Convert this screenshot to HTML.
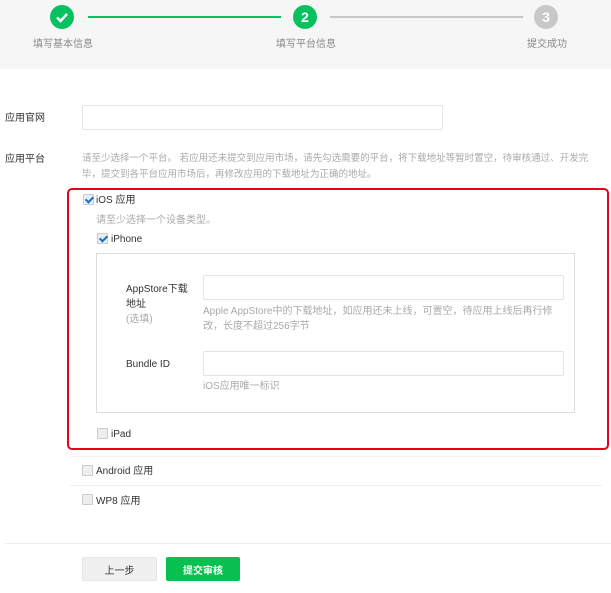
<!DOCTYPE html>
<html><head><meta charset="utf-8"><style>
*{margin:0;padding:0;box-sizing:border-box}
body{width:611px;height:593px;background:#fff;font-family:"Liberation Sans","Noto Sans CJK SC",sans-serif;position:relative;overflow:hidden;color:#333}
.a{position:absolute;white-space:nowrap;line-height:12px}
.hdr{position:absolute;left:0;top:0;width:611px;height:69px;background:#f6f6f6}
.c{position:absolute;width:24px;height:24px;border-radius:50%;color:#fff;font-size:14px;font-weight:bold;text-align:center;line-height:24px}
.l{position:absolute;height:2px;top:16px}
.sl{font-size:10px;color:#888;top:39px}
.lab{font-size:10px;color:#333}
.inp{position:absolute;border:1px solid #e4e4e4;border-radius:2px;background:#fff}
.tip{font-size:10px;color:#aaa}
.cb{position:absolute;width:11px;height:11px;border:1px solid #ccc;background:#eee;border-radius:1px}
.cb.on{background:#e8eef5}
.cb.on::after{content:"";position:absolute;left:3px;top:0px;width:3px;height:6px;border:solid #1a6fc4;border-width:0 2px 2px 0;transform:rotate(45deg)}
.t{font-size:10px;color:#333}
.hr{position:absolute;height:1px;background:#ececec}
.btn{position:absolute;display:flex;align-items:center;justify-content:center;font-size:10px;border-radius:2px}
</style></head><body>
<div class="hdr"></div>
<div class="c" style="left:50px;top:5px;background:#07c160"><svg width="24" height="24"><path d="M7 12.5l3.5 3.5 6.5-7" stroke="#fff" stroke-width="2.5" fill="none"/></svg></div>
<div class="l" style="left:88px;width:193px;background:#07c160"></div>
<div class="c" style="left:293px;top:5px;background:#07c160">2</div>
<div class="l" style="left:330px;width:193px;background:#c8c8c8"></div>
<div class="c" style="left:534px;top:5px;background:#c8c8c8">3</div>
<div class="a sl" style="left:33px">填写基本信息</div>
<div class="a sl" style="left:276px">填写平台信息</div>
<div class="a sl" style="left:527px">提交成功</div>

<div class="a lab" style="left:5px;top:113px">应用官网</div>
<div class="inp" style="left:82px;top:105px;width:361px;height:25px"></div>
<div class="a lab" style="left:5px;top:154px">应用平台</div>
<div class="a tip" style="left:82px;top:151px;line-height:16px;font-size:9.5px">请至少选择一个平台。 若应用还未提交到应用市场，请先勾选需要的平台，将下载地址等暂时置空，待审核通过、开发完<br>毕，提交到各平台应用市场后，再修改应用的下载地址为正确的地址。</div>

<div style="position:absolute;left:67px;top:188px;width:542px;height:262px;border:2px solid #e8001c;border-radius:5px"></div>
<div class="cb on" style="left:83px;top:194px"></div>
<div class="a t" style="left:96px;top:195px">iOS 应用</div>
<div class="a tip" style="left:96px;top:215px">请至少选择一个设备类型。</div>
<div class="cb on" style="left:97px;top:233px"></div>
<div class="a t" style="left:111px;top:234px">iPhone</div>
<div style="position:absolute;left:96px;top:253px;width:479px;height:160px;border:1px solid #ddd"></div>
<div class="a t" style="left:126px;top:282px;line-height:15px">AppStore下载<br>地址<br><span style="color:#aaa">(选填)</span></div>
<div class="inp" style="left:203px;top:275px;width:361px;height:25px"></div>
<div class="a tip" style="left:203px;top:304px;line-height:15px">Apple AppStore中的下载地址，如应用还未上线，可置空，待应用上线后再行修<br>改，长度不超过256字节</div>
<div class="a t" style="left:126px;top:359px">Bundle ID</div>
<div class="inp" style="left:203px;top:351px;width:361px;height:25px"></div>
<div class="a tip" style="left:203px;top:381px">iOS应用唯一标识</div>
<div class="cb" style="left:97px;top:428px"></div>
<div class="a t" style="left:111px;top:429px">iPad</div>

<div class="hr" style="left:70px;top:456px;width:532px;background:#f2f2f2"></div>
<div class="cb" style="left:82px;top:465px"></div>
<div class="a t" style="left:96px;top:466px">Android 应用</div>
<div class="hr" style="left:70px;top:485px;width:532px"></div>
<div class="cb" style="left:82px;top:494px"></div>
<div class="a t" style="left:96px;top:496px">WP8 应用</div>
<div class="hr" style="left:5px;top:543px;width:606px"></div>
<div class="btn" style="left:82px;top:557px;width:75px;height:24px;background:#f0f0f0;border:1px solid #e6e6e6;color:#333">上一步</div>
<div class="btn" style="left:166px;top:557px;width:74px;height:24px;background:#07c050;color:#fff;font-weight:bold">提交审核</div>
</body></html>
